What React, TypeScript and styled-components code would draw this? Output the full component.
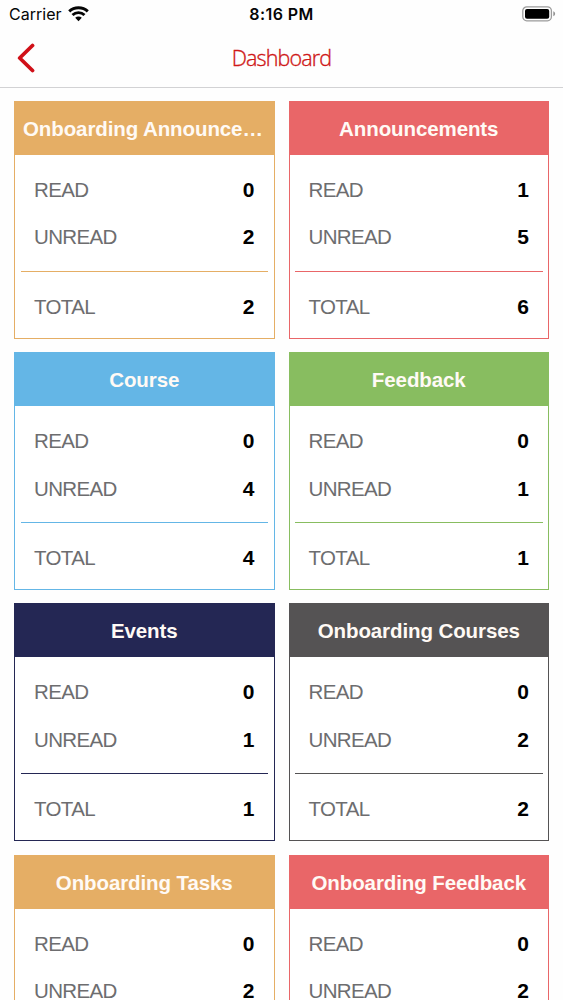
import React from 'react';
import styled, { createGlobalStyle } from 'styled-components';

const GlobalStyle = createGlobalStyle`
  * { box-sizing: border-box; }
  body { margin: 0; background: #fefefe; }
`;

const Screen = styled.main`
  height: 1000px;
  overflow: hidden;
  background: #fefefe;
  font-family: 'Liberation Sans', Arial, sans-serif;
`;

const StatusBar = styled.div`
  display: grid;
  grid-template-columns: 1fr auto 1fr;
  align-items: center;
  height: 28px;
  padding: 0 7px 0 9px;
  font-family: Inter, sans-serif;
  font-size: 16px;
  color: #050505;
`;

const Carrier = styled.div`
  display: flex;
  align-items: center;
  gap: 6px;
  letter-spacing: 0.02px;
`;

const Clock = styled.div`
  font-weight: 600;
  letter-spacing: 0.4px;
  margin-right: 2px;
`;

const BatterySlot = styled.div`
  display: flex;
  justify-content: flex-end;
`;

const NavBar = styled.header`
  display: grid;
  grid-template-columns: 60px 1fr 60px;
  align-items: center;
  height: 60px;
  border-bottom: 1px solid #d2d2d4;
`;

const BackButton = styled.button`
  display: flex;
  padding: 0 0 0 16px;
  border: 0;
  background: none;
`;

const NavTitle = styled.h1`
  margin: 0;
  text-align: center;
  font-family: 'Open Sans', sans-serif;
  font-size: 21.5px;
  font-weight: 300;
  letter-spacing: -0.85px;
  line-height: 30px;
  color: #cf1717;
  -webkit-text-stroke: 0.35px #cf1717;
`;

const CardGrid = styled.section`
  display: grid;
  grid-template-columns: repeat(2, minmax(0, 1fr));
  gap: 13.3px 14px;
  padding: 12.7px 14px 0;
`;

const Card = styled.article<{ $color: string }>`
  height: 238px;
  border: 1.4px solid ${(p) => p.$color};
  background: #fff;
`;

const CardTitle = styled.h2<{ $color: string }>`
  height: 53px;
  margin: 0;
  padding: 0 8px;
  background: ${(p) => p.$color};
  color: #fffaf5;
  font-size: 20.5px;
  font-weight: 700;
  line-height: 54px;
  letter-spacing: -0.1px;
  text-align: center;
  white-space: nowrap;
  overflow: hidden;
  text-overflow: ellipsis;
`;

const Counts = styled.div`
  padding-top: 11.3px;
  height: 116px;
`;

const Row = styled.div`
  display: flex;
  align-items: center;
  justify-content: space-between;
  height: 47.5px;
  padding: 0 19px;
`;

const Label = styled.span`
  font-size: 20.5px;
  letter-spacing: -0.65px;
  color: #6d6d6f;
`;

const Value = styled.span`
  font-size: 21px;
  font-weight: 700;
  color: #000;
`;

const Divider = styled.hr<{ $color: string }>`
  margin: 0 5.5px 11.4px;
  border: 0;
  border-top: 1px solid ${(p) => p.$color};
`;

const cards = [
  { title: 'Onboarding Announcements', color: '#e5ae65', read: 0, unread: 2 },
  { title: 'Announcements', color: '#e96668', read: 1, unread: 5 },
  { title: 'Course', color: '#64b6e6', read: 0, unread: 4 },
  { title: 'Feedback', color: '#88bd60', read: 0, unread: 1 },
  { title: 'Events', color: '#242754', read: 0, unread: 1 },
  { title: 'Onboarding Courses', color: '#555354', read: 0, unread: 2 },
  { title: 'Onboarding Tasks', color: '#e5ae65', read: 0, unread: 2 },
  { title: 'Onboarding Feedback', color: '#e96668', read: 0, unread: 2 },
];

function CountRow({ label, value }: { label: string; value: number }) {
  return (
    <Row>
      <Label>{label}</Label>
      <Value>{value}</Value>
    </Row>
  );
}

function WifiIcon() {
  return (
    <svg width="21" height="16" viewBox="0 0 21 16" fill="none" stroke="#050505" strokeWidth="2.9">
      <path d="M1.2 5.4C6.3.5 14.7.5 19.8 5.4" />
      <path d="M4.5 9C7.9 5.8 13.1 5.8 16.5 9" />
      <path d="M7.2 11.8c1.9-1.8 4.7-1.8 6.6 0l-3.3 3.4Z" fill="#050505" stroke="none" />
    </svg>
  );
}

function BatteryIcon() {
  return (
    <svg width="34" height="16" viewBox="0 0 34 16">
      <rect x="0.8" y="0.8" width="28.6" height="14" rx="4" fill="#fff" stroke="#9b9b9b" strokeWidth="1.3" />
      <rect x="3" y="3" width="24.2" height="9.8" rx="2" fill="#000" />
      <path d="M31.3 5.3c2.4.8 2.4 4.2 0 5Z" fill="#929292" />
    </svg>
  );
}

export default function App() {
  return (
    <Screen>
      <GlobalStyle />
      <StatusBar>
        <Carrier>
          Carrier
          <WifiIcon />
        </Carrier>
        <Clock>8:16 PM</Clock>
        <BatterySlot>
          <BatteryIcon />
        </BatterySlot>
      </StatusBar>
      <NavBar>
        <BackButton aria-label="Back">
          <svg width="20" height="30" viewBox="0 0 20 30" fill="none">
            <path d="M16.5 2.5 3.7 15l12.8 12.5" stroke="#d01018" strokeWidth="3.8" strokeLinecap="round" strokeLinejoin="round" />
          </svg>
        </BackButton>
        <NavTitle>Dashboard</NavTitle>
      </NavBar>
      <CardGrid>
        {cards.map((card) => (
          <Card key={card.title} $color={card.color}>
            <CardTitle $color={card.color}>{card.title}</CardTitle>
            <Counts>
              <CountRow label="READ" value={card.read} />
              <CountRow label="UNREAD" value={card.unread} />
            </Counts>
            <Divider $color={card.color} />
            <CountRow label="TOTAL" value={card.read + card.unread} />
          </Card>
        ))}
      </CardGrid>
    </Screen>
  );
}
